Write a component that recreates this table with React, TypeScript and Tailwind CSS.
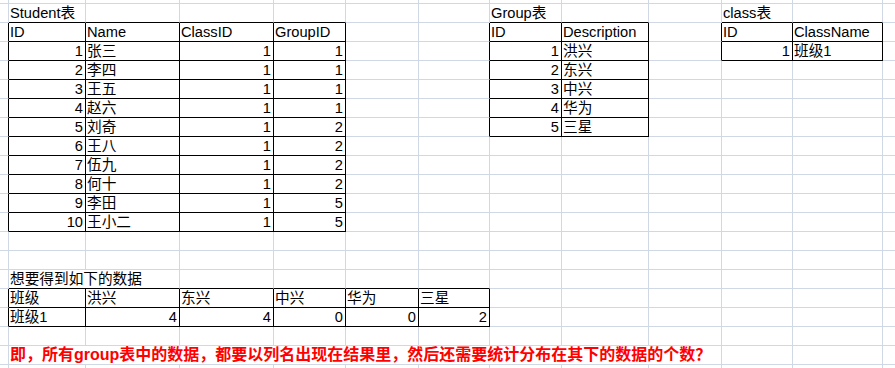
type Cell = { text: string; right?: boolean; span?: number; red?: boolean };

// column count of the sheet (first and last are partial)
const COLS = 13;
const ROWS = 21;

const students: [number, string, number, number][] = [
  [1, '张三', 1, 1],
  [2, '李四', 1, 1],
  [3, '王五', 1, 1],
  [4, '赵六', 1, 1],
  [5, '刘奇', 1, 2],
  [6, '王八', 1, 2],
  [7, '伍九', 1, 2],
  [8, '何十', 1, 2],
  [9, '李田', 1, 5],
  [10, '王小二', 1, 5],
];

const groups = ['洪兴', '东兴', '中兴', '华为', '三星'];

// bordered regions: [rowFrom, rowTo, colFrom, colTo]
const tables = [
  [2, 12, 1, 4],
  [2, 7, 7, 8],
  [2, 3, 10, 11],
  [16, 17, 1, 6],
];

const inTable = (r: number, c: number) =>
  tables.some(([r0, r1, c0, c1]) => r >= r0 && r <= r1 && c >= c0 && c <= c1);

function buildCells() {
  const cells: Record<string, Cell> = {};
  const put = (r: number, c: number, cell: Cell) => (cells[`${r}-${c}`] = cell);

  put(1, 1, { text: 'Student表' });
  put(1, 7, { text: 'Group表' });
  put(1, 10, { text: 'class表' });

  ['ID', 'Name', 'ClassID', 'GroupID'].forEach((h, i) => put(2, 1 + i, { text: h }));
  students.forEach(([id, name, cls, grp], i) => {
    put(3 + i, 1, { text: String(id), right: true });
    put(3 + i, 2, { text: name });
    put(3 + i, 3, { text: String(cls), right: true });
    put(3 + i, 4, { text: String(grp), right: true });
  });

  put(2, 7, { text: 'ID' });
  put(2, 8, { text: 'Description' });
  groups.forEach((g, i) => {
    put(3 + i, 7, { text: String(i + 1), right: true });
    put(3 + i, 8, { text: g });
  });

  put(2, 10, { text: 'ID' });
  put(2, 11, { text: 'ClassName' });
  put(3, 10, { text: '1', right: true });
  put(3, 11, { text: '班级1' });

  put(15, 1, { text: '想要得到如下的数据', span: 2 });
  ['班级', ...groups].forEach((h, i) => put(16, 1 + i, { text: h }));
  put(17, 1, { text: '班级1' });
  [4, 4, 0, 0, 2].forEach((n, i) => put(17, 2 + i, { text: String(n), right: true }));

  put(19, 1, {
    text: '即，所有group表中的数据，都要以列名出现在结果里，然后还需要统计分布在其下的数据的个数？',
    span: 9,
    red: true,
  });
  return cells;
}

export default function App() {
  const cells = buildCells();
  const out: React.ReactNode[] = [];

  for (let r = 0; r < ROWS; r++) {
    for (let c = 0; c < COLS; c++) {
      const cell = cells[`${r}-${c}`];
      const span = cell?.span ?? 1;
      const last = c + span - 1;
      let bottomBlack = false;
      for (let k = c; k <= last; k++) if (inTable(r, k) || inTable(r + 1, k)) bottomBlack = true;
      const rightBlack = inTable(r, last) || inTable(r, last + 1);

      out.push(
        <div
          key={`${r}-${c}`}
          className={[
            'border-r border-b whitespace-nowrap overflow-visible',
            rightBlack ? 'border-r-black' : 'border-r-[#d0d7e5]',
            bottomBlack ? 'border-b-black' : 'border-b-[#d0d7e5]',
            span === 2 ? 'col-span-2' : '',
            span === 9 ? 'col-span-9' : '',
            cell?.right ? 'text-right pr-[2px]' : 'pl-[1px]',
            cell?.red
              ? 'text-[16px] font-bold text-[#ff0000] leading-[18px]'
              : 'text-[14.67px] text-black leading-[18px]',
          ].join(' ')}
        >
          {cell?.text}
        </div>
      );
      c = last;
    }
  }

  return (
    <div className="w-[895px] h-[368px] overflow-hidden bg-white font-['Liberation_Sans','Noto_Sans_CJK_SC',sans-serif]">
      <div className="grid grid-cols-[9px_77px_94px_94px_72px_73px_71px_72px_87px_73px_71px_90px_100px] grid-rows-[4px_repeat(20,19px)]">
        {out}
      </div>
    </div>
  );
}
